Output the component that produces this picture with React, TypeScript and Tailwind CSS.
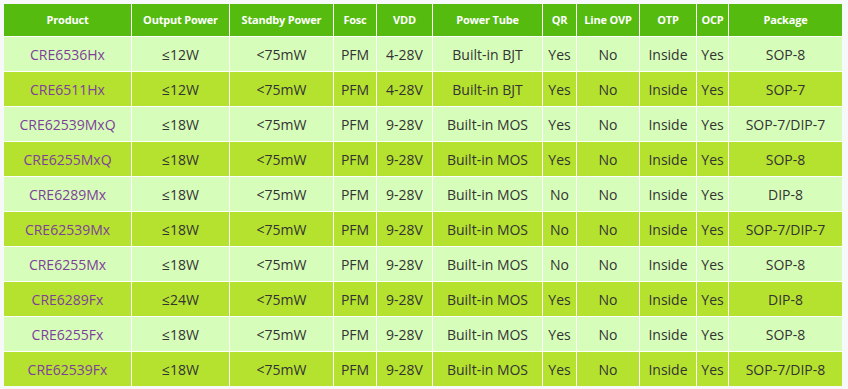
import React from "react";

const headers = ["Product", "Output Power", "Standby Power", "Fosc", "VDD", "Power Tube", "QR", "Line OVP", "OTP", "OCP", "Package"];

const rows: string[][] = [
  ["CRE6536Hx", "≤12W", "<75mW", "PFM", "4-28V", "Built-in BJT", "Yes", "No", "Inside", "Yes", "SOP-8"],
  ["CRE6511Hx", "≤12W", "<75mW", "PFM", "4-28V", "Built-in BJT", "Yes", "No", "Inside", "Yes", "SOP-7"],
  ["CRE62539MxQ", "≤18W", "<75mW", "PFM", "9-28V", "Built-in MOS", "Yes", "No", "Inside", "Yes", "SOP-7/DIP-7"],
  ["CRE6255MxQ", "≤18W", "<75mW", "PFM", "9-28V", "Built-in MOS", "Yes", "No", "Inside", "Yes", "SOP-8"],
  ["CRE6289Mx", "≤18W", "<75mW", "PFM", "9-28V", "Built-in MOS", "No", "No", "Inside", "Yes", "DIP-8"],
  ["CRE62539Mx", "≤18W", "<75mW", "PFM", "9-28V", "Built-in MOS", "No", "No", "Inside", "Yes", "SOP-7/DIP-7"],
  ["CRE6255Mx", "≤18W", "<75mW", "PFM", "9-28V", "Built-in MOS", "No", "No", "Inside", "Yes", "SOP-8"],
  ["CRE6289Fx", "≤24W", "<75mW", "PFM", "9-28V", "Built-in MOS", "Yes", "No", "Inside", "Yes", "DIP-8"],
  ["CRE6255Fx", "≤18W", "<75mW", "PFM", "9-28V", "Built-in MOS", "Yes", "No", "Inside", "Yes", "SOP-8"],
  ["CRE62539Fx", "≤18W", "<75mW", "PFM", "9-28V", "Built-in MOS", "Yes", "No", "Inside", "Yes", "SOP-7/DIP-8"],
];

export default function App() {
  return (
    <div className="w-[848px] h-[389px] bg-[#f7f8fa] p-1" style={{ fontFamily: '"Open Sans", "Noto Sans", sans-serif' }}>
      <div className="grid grid-cols-[127px_97px_103px_42px_55px_109px_33px_62px_56px_31px_113px] grid-rows-[32px_repeat(10,34px)] gap-px bg-white w-[838px]">
        {headers.map((h) => (
          <div key={h} className="bg-[#55bb0f] text-white font-bold text-[11px] tracking-[-0.2px] flex items-center justify-center whitespace-nowrap">
            {h}
          </div>
        ))}
        {rows.map((r, i) =>
          r.map((c, j) => (
            <div
              key={`${i}-${j}`}
              className={`${i % 2 === 0 ? "bg-[#d7fdba]" : "bg-[#b5e22f]"} ${j === 0 ? "text-[#7e3f9a]" : "text-[#333333]"} text-[14px] flex items-center justify-center whitespace-nowrap`}
            >
              {c}
            </div>
          ))
        )}
      </div>
    </div>
  );
}
